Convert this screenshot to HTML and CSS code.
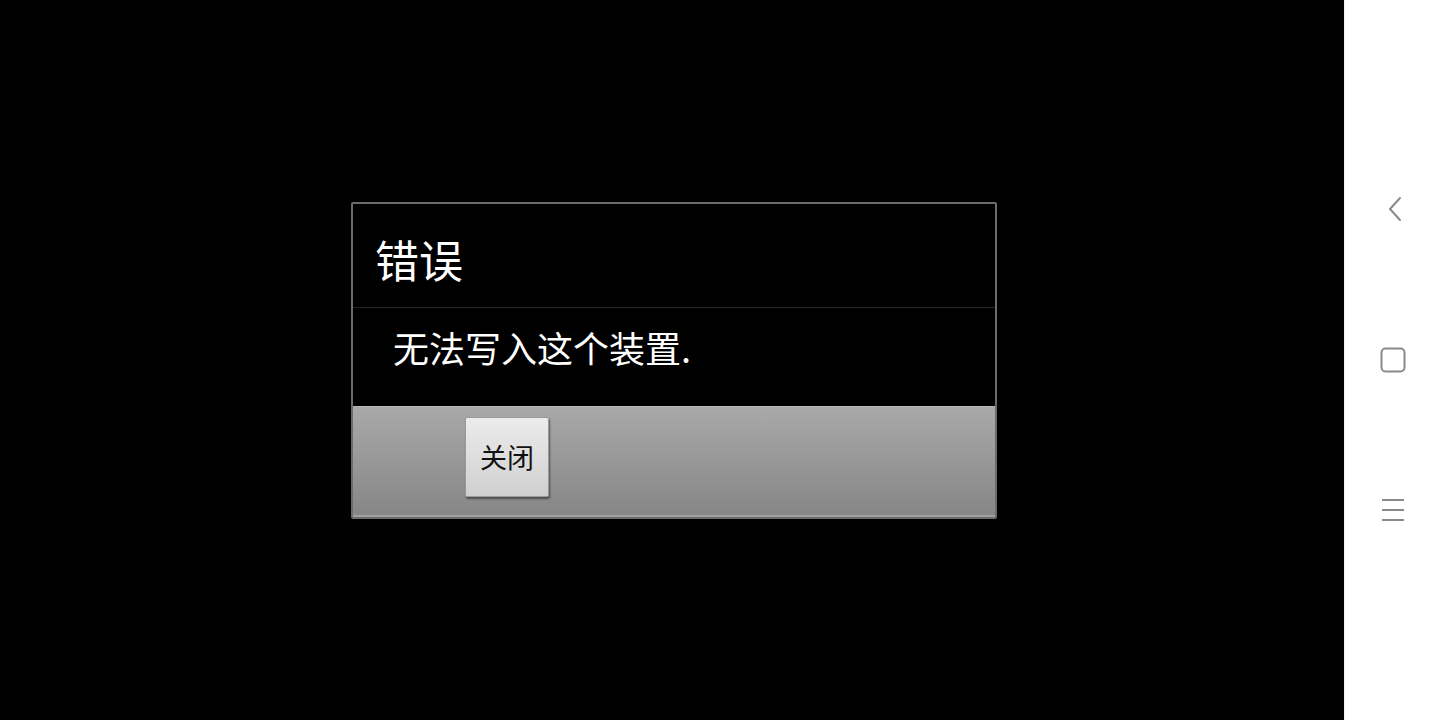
FILE: index.html
```html
<!DOCTYPE html>
<html lang="zh-CN">
<head>
<meta charset="utf-8">
<title>错误</title>
<link rel="stylesheet" href="styles.css">
</head>
<body>
<div class="screen">
  <main class="stage">
    <div class="dialog">
      <div class="dialog-title">错误</div>
      <div class="dialog-message">无法写入这个装置.</div>
      <div class="dialog-buttons">
        <button class="btn">关闭</button>
      </div>
    </div>
  </main>
  <nav class="navbar">
    <svg class="nav-icon" width="30" height="30" viewBox="0 0 30 30"><path d="M22 3 L12 14 L22 25" fill="none" stroke="#8a8a8a" stroke-width="2" stroke-linecap="round" stroke-linejoin="round"/></svg>
    <svg class="nav-icon" width="30" height="30" viewBox="0 0 30 30"><rect x="3.5" y="3.5" width="23" height="23" rx="4" fill="none" stroke="#8a8a8a" stroke-width="2"/></svg>
    <svg class="nav-icon" width="30" height="30" viewBox="0 0 30 30"><path d="M4 5 H26 M4 15 H26 M4 25 H26" fill="none" stroke="#8a8a8a" stroke-width="2"/></svg>
  </nav>
</div>
</body>
</html>
```
FILE: styles.css
```css
html, body {
  margin: 0;
  padding: 0;
  width: 1440px;
  height: 720px;
  overflow: hidden;
  background: #000;
  font-family: "Noto Sans CJK SC", "Noto Sans", sans-serif;
}
.screen {
  display: flex;
  width: 1440px;
  height: 720px;
}
.stage {
  width: 1344px;
  height: 720px;
  background: #000;
  display: flex;
  align-items: center;
  justify-content: center;
}
.dialog {
  width: 642px;
  border: 2px solid #6b6b6b;
  border-radius: 2px;
  display: flex;
  flex-direction: column;
  margin-left: 4px;
  margin-top: 1px;
}
.dialog-title {
  height: 104px;
  border-bottom: 1px solid #262626;
  display: flex;
  align-items: center;
  padding-left: 22px;
  padding-top: 6px;
  box-sizing: border-box;
  color: #fff;
  font-size: 44px;
  line-height: 1;
}
.dialog-message {
  height: 98px;
  display: flex;
  align-items: center;
  padding-left: 40px;
  padding-bottom: 20px;
  box-sizing: border-box;
  color: #fff;
  font-size: 36px;
  line-height: 1;
}
.dialog-buttons {
  height: 111px;
  box-sizing: border-box;
  background: linear-gradient(#a9a9a9, #868686);
  border-top: 1px solid #b5b5b5;
  border-bottom: 2px solid #a0a0a0;
  padding: 10px 0 0 112px;
  display: flex;
  align-items: flex-start;
}
.btn {
  width: 84px;
  height: 80px;
  border: 1px solid #9a9a9a;
  border-radius: 2px;
  background: linear-gradient(#ececec, #cfcfcf);
  box-shadow: 1px 2px 2px rgba(0,0,0,0.45);
  color: #111;
  font-family: "Noto Sans CJK SC", sans-serif;
  font-size: 27px;
  padding: 0 0 2px 0;
}
.navbar {
  width: 96px;
  height: 720px;
  background: #fff;
  border-left: 1px solid #f0f0f0;
  box-sizing: border-box;
  display: flex;
  flex-direction: column;
  align-items: center;
  padding-top: 195px;
  gap: 120px;
}
.nav-icon {
  display: block;
}
```
